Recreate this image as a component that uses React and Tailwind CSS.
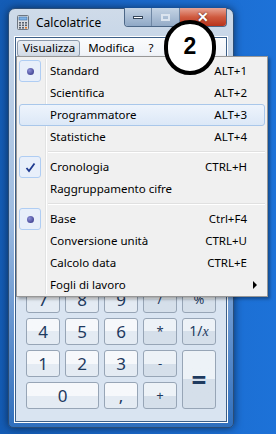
import React from "react";

const menuItems = [
    { label: "Standard", keys: "ALT+1", mark: "dot" },
    { label: "Scientifica", keys: "ALT+2" },
    { label: "Programmatore", keys: "ALT+3", hover: true },
    { label: "Statistiche", keys: "ALT+4" },
    "sep",
    { label: "Cronologia", keys: "CTRL+H", mark: "check" },
    { label: "Raggruppamento cifre" },
    "sep",
    { label: "Base", keys: "Ctrl+F4", mark: "dot" },
    { label: "Conversione unità", keys: "CTRL+U" },
    { label: "Calcolo data", keys: "CTRL+E" },
    { label: "Fogli di lavoro", sub: true },
];

// tasti della calcolatrice (le prime due righe restano coperte dal menu)
const keys = [
    ["m1", "m2", "m3", "m4", "m5"],
    ["c1", "c2", "c3", "c4", "c5"],
    ["7", "8", "9", "/", "%"],
    ["4", "5", "6", "*", "1/x"],
];
const ops = ["/", "%", "*", "1/x", "-", "+", "=", "m4", "m5", "c4", "c5"];

function CalcIcon() {
    return (
        <svg width="12" height="15" viewBox="0 0 12 15">
            <rect x="0.5" y="0.5" width="11" height="14" rx="1" fill="#d9dde2" stroke="#6d7681" />
            <rect x="2" y="2" width="8" height="3" fill="#7fb2e6" stroke="#3d6fa6" strokeWidth="0.6" />
            {[0, 1, 2].map((r) =>
                [0, 1, 2].map((c) => (
                    <rect key={`${r}${c}`} x={2 + c * 3} y={7 + r * 2.5} width="2" height="1.6" fill={c === 2 && r === 2 ? "#e07a2a" : "#5b6470"} />
                ))
            )}
        </svg>
    );
}

function Key({ label, className = "" }) {
    const op = ops.includes(label);
    const hidden = label.length === 2 && /[mc]\d/.test(label);
    return (
        <div
            className={`flex items-center justify-center rounded-[3px] border border-[#97a5b6] text-[#1e3a5f] ${
                op
                    ? "bg-linear-to-b from-[#edf2f7] from-50% to-[#d5dfea] to-50% text-[13px]"
                    : "bg-linear-to-b from-[#f6f8fb] from-50% to-[#e4ebf3] to-50% text-[17px]"
            } ${className}`}
        >
            {hidden ? null : label === "1/x" ? (
                <span className="text-[14px]">
                    1/<i className="font-['Liberation_Serif']">x</i>
                </span>
            ) : (
                label
            )}
        </div>
    );
}

function MenuRow({ item }) {
    return (
        <div
            className={`relative flex h-[22px] items-center rounded-[3px] pr-[17px] ${
                item.hover ? "border border-[#a9c7ea] bg-linear-to-b from-[#eef4fc] to-[#dce8f7]" : "border border-transparent"
            }`}
        >
            <div className="flex w-[30px] shrink-0 items-center">
                {item.mark && (
                    <div className="-ml-px flex h-[22px] w-[22px] items-center justify-center rounded-[3px] border border-[#afcdf3] bg-[#e8effa]">
                        {item.mark === "dot" ? (
                            <div className="h-[7px] w-[7px] rounded-full bg-[radial-gradient(circle_at_35%_35%,#8c8fd6,#2d2f80)]" />
                        ) : (
                            <svg width="11" height="11" viewBox="0 0 11 11">
                                <path d="M1.5 6 L4 9 L9.5 1.5" fill="none" stroke="#1f3a8f" strokeWidth="1.8" />
                            </svg>
                        )}
                    </div>
                )}
            </div>
            <span className="flex-1 text-[#000]">{item.label}</span>
            {item.keys && <span>{item.keys}</span>}
            {item.sub && (
                <div className="-mr-[10px] h-0 w-0 border-y-[4px] border-l-[4px] border-y-transparent border-l-black" />
            )}
        </div>
    );
}

export default function App() {
    return (
        <div className="relative h-[434px] w-[276px] overflow-hidden bg-linear-to-r from-[#145cb5] via-[#1a69cc] to-[#1d72d8] font-['Noto_Sans',sans-serif] text-[11.5px] leading-none text-black">
            {/* finestra */}
            <div className="absolute left-[8px] top-[8px] h-[420px] w-[226px] rounded-t-[7px] rounded-b-[5px] border border-[#2b4d76] bg-linear-to-b from-[#cfdbe9] via-[#9dbbe0] to-[#2f6fbd] shadow-[0_0_8px_rgba(0,0,0,0.55)]">
                {/* barra del titolo */}
                <div className="flex h-[27px] items-start pr-[6px]">
                    <div className="ml-[8px] mt-[6px]">
                        <CalcIcon />
                    </div>
                    <span className="ml-[7px] mt-[8px] text-[12px]">Calcolatrice</span>
                    <div className="ml-auto flex h-[19px] -mt-px overflow-hidden rounded-b-[4px] border border-t-0 border-[#4c6787]">
                        <div className="flex w-[27px] items-center justify-center border-r border-[#6f87a4] bg-linear-to-b from-[#c4d3e4] to-[#8fa8c6]">
                            <div className="h-[3px] w-[10px] border border-[#34455a] bg-white" />
                        </div>
                        <div className="flex w-[28px] items-center justify-center border-r border-[#6f87a4] bg-linear-to-b from-[#c4d3e4] to-[#94abc7]">
                            <div className="h-[7px] w-[9px] border-2 border-[#dbe4ef]" />
                        </div>
                        <div className="flex w-[46px] items-center justify-center bg-linear-to-b from-[#e6a394] via-[#cf5a3f] to-[#b8321a] text-[14px] font-bold text-white [text-shadow:0_0_2px_#3a1a10]">
                            ✕
                        </div>
                    </div>
                </div>

                {/* menu + area client */}
                <div className="mx-[5px] flex h-[387px] flex-col border border-white">
                    <div className="flex h-full flex-col border border-[#3c5f88]">
                        <div className="flex h-[20px] shrink-0 items-center bg-linear-to-b from-[#fbfcfd] to-[#eef2f7] text-[12px]">
                            <div className="ml-px flex h-[17px] items-center rounded-[3px] border border-[#8c9aac] bg-linear-to-b from-[#e8edf3] to-[#d3dbe6] pl-[5px] pr-[4px] text-[11.5px]">
                                Visualizza
                            </div>
                            <span className="ml-[8px] text-[11.5px]">Modifica</span>
                            <span className="ml-[14px] text-[11.5px]">?</span>
                        </div>
                        <div className="flex flex-1 flex-col bg-[#d9e4f1] px-[10px] pb-[12px]">
                            <div className="mt-[8px] h-[52px] rounded-[2px] border border-[#8e9fb4] bg-linear-to-b from-[#e9f0f8] to-white" />
                            <div className="mt-auto grid grid-cols-[repeat(5,34px)] grid-rows-[repeat(6,27px)] gap-[5px]">
                                {keys.flat().map((k) => (
                                    <Key key={k} label={k} />
                                ))}
                                <Key label="1" />
                                <Key label="2" />
                                <Key label="3" />
                                <Key label="-" />
                                <Key label="=" className="row-span-2 !text-[26px] font-bold" />
                                <Key label="0" className="col-span-2" />
                                <Key label="," />
                                <Key label="+" />
                            </div>
                        </div>
                    </div>
                </div>
            </div>

            {/* menu Visualizza aperto */}
            <div className="absolute left-[16px] top-[56px] h-[241px] w-[252px] border border-[#979797] bg-[#f0f0f0] px-[2px] pt-[3px] shadow-[2px_2px_3px_rgba(0,0,0,0.35)]">
                <div className="absolute bottom-[2px] left-[28px] top-[2px] w-[2px] border-x border-l-[#e2e3e3] border-r-white" />
                {menuItems.map((item, i) =>
                    item === "sep" ? (
                        <div key={i} className="relative flex h-[8px] items-center pl-[29px]">
                            <div className="h-[2px] w-full border-y border-t-[#e0e0e0] border-b-white" />
                        </div>
                    ) : (
                        <MenuRow key={i} item={item} />
                    )
                )}
            </div>

            {/* cerchio numerato */}
            <div className="absolute left-[164px] top-[20px] flex h-[55px] w-[52px] items-center justify-center rounded-full border-[4px] border-black bg-white">
                <span className="-mt-[2px] font-['Liberation_Sans'] text-[23px] font-bold">2</span>
            </div>
        </div>
    );
}
